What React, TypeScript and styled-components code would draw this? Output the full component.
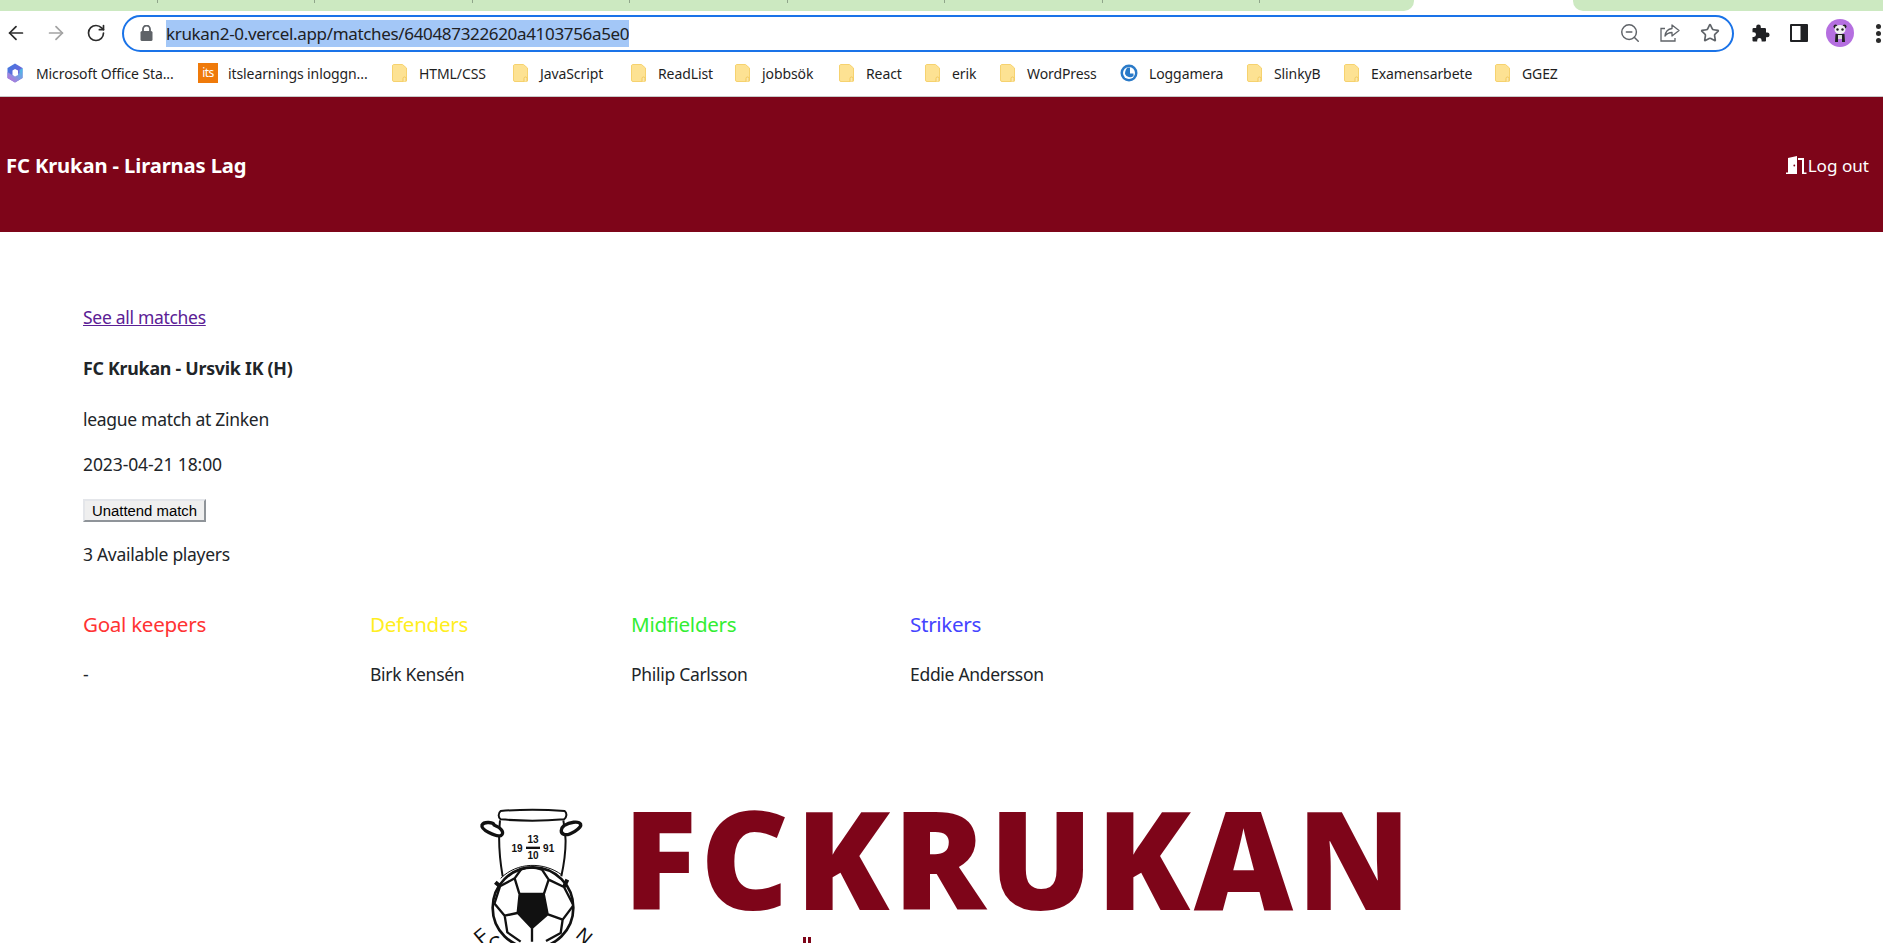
import React from "react";
import styled, { createGlobalStyle } from "styled-components";
import { ArrowLeft, ArrowRight, RotateCw, ZoomOut, Star } from "lucide-react";

const Global = createGlobalStyle`
  html, body { margin: 0; padding: 0; background: #fff; overflow: hidden; }
  body { font-family: "Noto Sans", "Open Sans", sans-serif; color: #212529; }
`;

const Page = styled.div`
  width: 1883px;
  height: 943px;
  overflow: hidden;
  display: flex;
  flex-direction: column;
`;

const TabStrip = styled.div`
  height: 11px;
  display: flex;
  flex: none;
  background: #fff;
`;
const TabGroup = styled.div<{ $w: number; $left?: boolean }>`
  width: ${p => p.$w}px;
  flex: none;
  background: #cce9c1;
  border-radius: ${p => (p.$left ? "0 0 0 10px" : "0 0 10px 0")};
  display: flex;
`;
const TabTick = styled.div`
  width: 157.5px;
  height: 3px;
  box-sizing: border-box;
  border-right: 1px solid #8fa58a;
  flex: none;
`;
const TabGap = styled.div`
  width: 159px;
  flex: none;
`;

const Toolbar = styled.div`
  height: 44px;
  flex: none;
  display: flex;
  align-items: center;
  color: #444;
`;
const NavSlot = styled.div<{ $w: number; $dim?: boolean }>`
  width: ${p => p.$w}px;
  flex: none;
  display: flex;
  align-items: center;
  justify-content: center;
  color: ${p => (p.$dim ? "#a3a3a3" : "#2b2b2b")};
`;
const UrlBar = styled.div`
  width: 1612px;
  height: 37px;
  margin-left: 9px;
  box-sizing: border-box;
  border: 2px solid #1a73e8;
  border-radius: 19px;
  display: flex;
  align-items: center;
  padding-left: 14px;
  flex: none;
`;
const UrlLock = styled.div`
  width: 16px;
  margin-right: 12px;
  flex: none;
  display: flex;
  justify-content: center;
`;
const UrlText = styled.span`
  background: #a3c7f7;
  color: #202124;
  font-size: 17px;
  line-height: 27px;
  width: 463px;
  flex: none;
  white-space: nowrap;
  overflow: hidden;
  letter-spacing: -0.33px;
`;
const UrlActions = styled.div`
  margin-left: auto;
  display: flex;
  align-items: center;
  color: #5f6368;
  padding-right: 10px;
`;
const ActionSlot = styled.div<{ $ml?: number }>`
  width: 24px;
  display: flex;
  justify-content: center;
  margin-left: ${p => p.$ml ?? 0}px;
`;
const RightTools = styled.div`
  display: flex;
  align-items: center;
  flex: none;
`;
const ToolSlot = styled.div<{ $w: number }>`
  width: ${p => p.$w}px;
  display: flex;
  justify-content: center;
  align-items: center;
  flex: none;
`;
const MenuDots = styled.div`
  width: 5px;
  height: 5px;
  border-radius: 50%;
  background: #2b2b2b;
  box-shadow: 0 -7px 0 #2b2b2b, 0 7px 0 #2b2b2b;
`;

const Bookmarks = styled.div`
  height: 41px;
  box-sizing: content-box;
  flex: none;
  display: flex;
  align-items: flex-start;
  padding-left: 6px;
  border-bottom: 1px solid #c9c9c9;
`;
const Bookmark = styled.div<{ $w: number }>`
  width: ${p => p.$w}px;
  height: 36px;
  flex: none;
  display: flex;
  align-items: center;
  font-size: 14px;
  color: #1f1f1f;
  white-space: nowrap;
  letter-spacing: -0.1px;
`;
const BookmarkIcon = styled.div<{ $w?: number }>`
  width: ${p => p.$w ?? 27}px;
  flex: none;
  display: flex;
  align-items: center;
`;
const ItsLogo = styled.div`
  width: 20px;
  height: 20px;
  background: #ef7a0a;
  color: #fff;
  font-size: 12px;
  line-height: 20px;
  text-align: center;
  letter-spacing: -0.5px;
`;

const Header = styled.header`
  height: 135px;
  flex: none;
  box-sizing: border-box;
  background: #7e0519;
  color: #fff;
  display: flex;
  justify-content: space-between;
  align-items: center;
  padding: 1px 14px 0 6px;
`;
const Brand = styled.div`
  font-size: 20.2px;
  font-weight: 700;
  letter-spacing: -0.12px;
`;
const LogOut = styled.div`
  display: flex;
  align-items: center;
  gap: 1px;
  font-size: 17.1px;
`;

const Main = styled.main`
  padding: 73px 0 0 83px;
  font-size: 17.5px;
  letter-spacing: -0.3px;
`;
const Line = styled.p<{ $mt?: number }>`
  margin: ${p => p.$mt ?? 0}px 0 0;
  line-height: 24px;
`;
const MatchTitle = styled.p`
  margin: 27px 0 0;
  line-height: 24px;
  font-size: 17.8px;
  font-weight: 700;
  letter-spacing: -0.25px;
`;
const MatchDate = styled.p`
  margin: 21px 0 0;
  line-height: 24px;
  letter-spacing: -0.1px;
`;
const BackLink = styled.a`
  color: #5b2095;
  text-decoration: underline;
  line-height: 24px;
  display: block;
`;
const AttendButton = styled.button`
  display: block;
  width: 123px;
  height: 23px;
  margin: 23px 0 0;
  padding: 0;
  box-sizing: border-box;
  background: #efefef;
  border: 2px solid;
  border-color: #e4e6ea #8f9499 #8f9499 #e4e6ea;
  font-family: "Liberation Sans", Arial, sans-serif;
  font-size: 14.9px;
  letter-spacing: 0;
  color: #000;
`;
const Positions = styled.div`
  display: grid;
  grid-template-columns: 287px 261px 279px auto;
  margin-top: 43px;
`;
const PositionCol = styled.section``;
const PositionTitle = styled.h3<{ $color: string }>`
  margin: 0 0 23px;
  font-size: 20.6px;
  line-height: 30px;
  font-weight: 400;
  color: ${p => p.$color};
  letter-spacing: -0.3px;
`;
const PlayerName = styled.div`
  line-height: 24px;
`;

const LogoRow = styled.div`
  margin: 109px 0 0 460px;
  height: 148px;
  display: flex;
  position: relative;
  flex: none;
`;
const CrestSvg = styled.svg`
  flex: none;
  display: block;
`;
const LogoWord = styled.div`
  margin: 15px 0 0 3px;
  color: #7e0519;
  font-family: "Open Sans", sans-serif;
  font-weight: 800;
  font-size: 137px;
  line-height: 94px;
  white-space: nowrap;
  letter-spacing: 3.4px;
  word-spacing: -36px;
`;
const Diaeresis = styled.div`
  position: absolute;
  left: 343px;
  top: 142px;
  width: 3px;
  height: 6px;
  background: #7e0519;
  box-shadow: 5px 0 0 #7e0519;
`;

const LockIcon = () => (
  <svg width="13" height="16" viewBox="0 0 13 16" fill="none">
    <rect x="0.5" y="6" width="12" height="10" rx="1.5" fill="#5f6368" />
    <path d="M3 6.500V4a3.500 3.500 0 0 1 7 0v2.500" stroke="#5f6368" strokeWidth="1.800" />
  </svg>
);

const Folder = () => (
  <svg width="16" height="18" viewBox="0 0 16 18">
    <path d="M1.500 .5h9l4 3.500v12a1.500 1.500 0 0 1-1.500 1.500H2A1.500 1.500 0 0 1 .5 16V2A1.500 1.500 0 0 1 1.500 .5z" fill="#fde293" stroke="#f6d26f" />
    <path d="M11 17.500v-3a1.500 1.500 0 0 1 3 0v3" fill="#fbe7ab" stroke="#f3c95c" />
  </svg>
);

const Ms365 = () => (
  <svg width="18" height="20" viewBox="0 0 18 20">
    <defs>
      <linearGradient id="m1" x1="0" y1="0" x2="1" y2="1">
        <stop offset="0" stopColor="#3b7be0" />
        <stop offset="1" stopColor="#8a5ad8" />
      </linearGradient>
      <linearGradient id="m2" x1="0" y1="1" x2="1" y2="0">
        <stop offset="0" stopColor="#c86ad8" />
        <stop offset="1" stopColor="#3fc0e8" />
      </linearGradient>
    </defs>
    <path d="M9 .5 16.500 5v10L9 19.500 1.500 15V5z" fill="url(#m1)" />
    <path d="M9 19.500 1.500 15V9l6 4 6-3v-3l3-2v10z" fill="url(#m2)" />
    <path d="M6.500 7.500 9 6l3 1.500v4.500L9 13.500 6.500 12z" fill="#fff" />
  </svg>
);

const Loggamera = () => (
  <svg width="18" height="18" viewBox="0 0 18 18">
    <circle cx="9" cy="9" r="8.500" fill="#2a7ac8" />
    <circle cx="9" cy="9" r="6" fill="#fff" />
    <path d="M7.500 3.500h2.500v6h3.500v2.500a5.500 5.500 0 0 1-8.500-2c0-3 1-5 2.500-6.500z" fill="#2a7ac8" />
  </svg>
);

const Puzzle = () => (
  <svg width="20" height="20" viewBox="0 0 20 20" fill="#202124">
    <path d="M7.500 1.500a2.300 2.300 0 0 1 2.300 2.300V5h4a1.200 1.200 0 0 1 1.200 1.200V9.500h1.200a2.400 2.400 0 0 1 0 4.800H15v3.200a1 1 0 0 1-1 1h-3.400v-1.300a2.200 2.200 0 0 0-4.400 0v1.300H2.500a1 1 0 0 1-1-1v-3.600h1.200a2.300 2.300 0 0 0 0-4.600H1.500V6.200A1.200 1.200 0 0 1 2.700 5h2.500V3.800a2.300 2.300 0 0 1 2.300-2.300z" />
  </svg>
);

const SidePanel = () => (
  <svg width="18" height="18" viewBox="0 0 18 18">
    <rect x="0" y="0" width="18" height="18" rx="1" fill="#202124" />
    <rect x="2" y="2" width="8.500" height="14" fill="#fff" />
  </svg>
);

const Avatar = () => (
  <svg width="28" height="28" viewBox="0 0 28 28">
    <circle cx="14" cy="14" r="14" fill="#b56fe0" />
    <circle cx="9.500" cy="7.500" r="2" fill="#222" />
    <circle cx="18.500" cy="7.500" r="2" fill="#222" />
    <ellipse cx="14" cy="10.500" rx="5.500" ry="4.500" fill="#f1f1f1" />
    <circle cx="11.500" cy="10.500" r="1.200" fill="#222" />
    <circle cx="16.500" cy="10.500" r="1.200" fill="#222" />
    <path d="M9.500 15h9l.5 8h-3v-3h-4v3h-3z" fill="#222" />
    <rect x="12" y="16" width="4" height="4" fill="#ddd" />
  </svg>
);

const ShareIcon = () => (
  <svg width="20" height="18" viewBox="0 0 20 18" fill="none" stroke="#5f6368" strokeWidth="1.300">
    <path d="M5 4.500H1v12.500h14v-3" />
    <path d="M12 1v3.500C8 5 5.500 7.500 5 12c2-2.500 4-3.500 7-3.500V12l7-5.500z" strokeLinejoin="round" />
  </svg>
);

const DoorIcon = () => (
  <svg width="21" height="18" viewBox="0 0 21 18" fill="#fff">
    <path d="M0 18v-1.500h2V2L11 0v18z" />
    <circle cx="8.300" cy="9.500" r="0.900" fill="#7e0519" />
    <path d="M12 2h6v14.500h2.500V18H16V4h-4z" />
  </svg>
);

const Crest = () => (
  <CrestSvg width="160" height="148" viewBox="0 0 480 444">
    <g fill="none" stroke="#111" strokeLinejoin="round">
      <path d="M122 48c60-5 130-5 192 0 8 6 6 20-2 25-60 5-130 5-190 0-8-5-8-19 0-25z" fill="#fff" strokeWidth="6" />
      <path d="M120 76c-2 20-8 78 8 168M310 76c6 30 14 76-6 168" strokeWidth="6" />
      <path d="M102 90c0-8-30-12-36 0-4 14 40 36 56 32 12-6 6-22-20-32z" fill="#fff" strokeWidth="10" />
      <path d="M312 92c16-10 44-16 50-4 4 10-34 36-50 30-12-4-10-18 0-26z" fill="#fff" strokeWidth="10" />
      <path d="M122 250c50-50 130-50 184-10" strokeWidth="3" />
      <circle cx="219" cy="338" r="121" fill="#fff" strokeWidth="8" />
      <path d="M178 296h74l12 62-48 42-44-46z" fill="#111" strokeWidth="5" />
      <path d="M178 296l-14-46 20-28M252 296l14-42-20-30M264 358l44 16 30-40M216 400v40M172 354l-38 8-32-38M164 250l-44 24-16 50M266 254l46 22 26 50M134 362l8 50 40 28M308 374l-6 40-44 24" strokeWidth="7" />
      <path d="M184 222c22-6 42-6 62 2" strokeWidth="7" />
      <path d="M120 274l-14-12M312 276l10-22" strokeWidth="12" />
    </g>
    <rect x="198" y="155" width="42" height="7" fill="#111" />
    <g fontFamily="'Liberation Sans', sans-serif" fontWeight="700" fontSize="30" fill="#111" textAnchor="middle">
      <text x="219" y="145">13</text>
      <text x="171" y="170">19</text>
      <text x="266" y="170">91</text>
      <text x="219" y="192">10</text>
    </g>
    <g fontFamily="'Liberation Sans', sans-serif" fontSize="58" fill="#111" textAnchor="middle">
      <text x="76" y="438" transform="rotate(-40 76 438)">F</text>
      <text x="118" y="462" transform="rotate(-30 118 462)">C</text>
      <text x="360" y="438" transform="rotate(40 360 438)">N</text>
    </g>
  </CrestSvg>
);

const folders1: [string, number][] = [
  ["HTML/CSS", 121],
  ["JavaScript", 118],
  ["ReadList", 104],
  ["jobbsök", 104],
  ["React", 86],
  ["erik", 75],
  ["WordPress", 120],
];
const folders2: [string, number][] = [
  ["SlinkyB", 97],
  ["Examensarbete", 151],
  ["GGEZ", 70],
];

const positions = [
  { title: "Goal keepers", color: "#ff3333", player: "-" },
  { title: "Defenders", color: "#ffee22", player: "Birk Kensén" },
  { title: "Midfielders", color: "#33ee33", player: "Philip Carlsson" },
  { title: "Strikers", color: "#4444ff", player: "Eddie Andersson" },
];

export default function App() {
  return (
    <Page>
      <Global />
      <TabStrip>
        <TabGroup $w={1414}>
          {Array.from({ length: 8 }).map((_, i) => (
            <TabTick key={i} />
          ))}
        </TabGroup>
        <TabGap />
        <TabGroup $w={310} $left />
      </TabStrip>

      <Toolbar>
        <NavSlot $w={32}><ArrowLeft size={22} strokeWidth={1.9} /></NavSlot>
        <NavSlot $w={47} $dim><ArrowRight size={22} strokeWidth={1.9} /></NavSlot>
        <NavSlot $w={34}><RotateCw size={20} strokeWidth={2} /></NavSlot>
        <UrlBar>
          <UrlLock><LockIcon /></UrlLock>
          <UrlText>krukan2-0.vercel.app/matches/640487322620a4103756a5e0</UrlText>
          <UrlActions>
            <ActionSlot><ZoomOut size={22} strokeWidth={1.6} /></ActionSlot>
            <ActionSlot $ml={16}><ShareIcon /></ActionSlot>
            <ActionSlot $ml={16}><Star size={20} strokeWidth={2} /></ActionSlot>
          </UrlActions>
        </UrlBar>
        <RightTools>
          <ToolSlot $w={53}><Puzzle /></ToolSlot>
          <ToolSlot $w={24}><SidePanel /></ToolSlot>
          <ToolSlot $w={57}><Avatar /></ToolSlot>
          <ToolSlot $w={21}><MenuDots /></ToolSlot>
        </RightTools>
      </Toolbar>

      <Bookmarks>
        <Bookmark $w={192}>
          <BookmarkIcon $w={30}><Ms365 /></BookmarkIcon>
          Microsoft Office Sta...
        </Bookmark>
        <Bookmark $w={194}>
          <BookmarkIcon $w={30}><ItsLogo>its</ItsLogo></BookmarkIcon>
          itslearnings inloggn...
        </Bookmark>
        {folders1.map(([t, w]) => (
          <Bookmark key={t} $w={w}>
            <BookmarkIcon><Folder /></BookmarkIcon>
            {t}
          </Bookmark>
        ))}
        <Bookmark $w={127}>
          <BookmarkIcon $w={29}><Loggamera /></BookmarkIcon>
          Loggamera
        </Bookmark>
        {folders2.map(([t, w]) => (
          <Bookmark key={t} $w={w}>
            <BookmarkIcon><Folder /></BookmarkIcon>
            {t}
          </Bookmark>
        ))}
      </Bookmarks>

      <Header>
        <Brand>FC Krukan - Lirarnas Lag</Brand>
        <LogOut><DoorIcon />Log out</LogOut>
      </Header>

      <Main>
        <BackLink href="#">See all matches</BackLink>
        <MatchTitle>FC Krukan - Ursvik IK (H)</MatchTitle>
        <Line $mt={27}>league match at Zinken</Line>
        <MatchDate>2023-04-21 18:00</MatchDate>
        <AttendButton>Unattend match</AttendButton>
        <Line $mt={20}>3 Available players</Line>
        <Positions>
          {positions.map(p => (
            <PositionCol key={p.title}>
              <PositionTitle $color={p.color}>{p.title}</PositionTitle>
              <PlayerName>{p.player}</PlayerName>
            </PositionCol>
          ))}
        </Positions>
      </Main>

      <LogoRow>
        <Crest />
        <LogoWord>FC KRUKAN</LogoWord>
        <Diaeresis />
      </LogoRow>
    </Page>
  );
}
